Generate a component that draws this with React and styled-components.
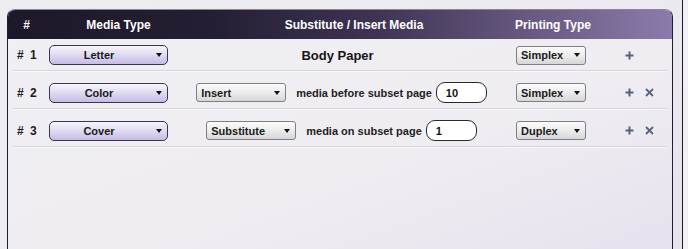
import styled, { createGlobalStyle } from "styled-components";

const GlobalStyle = createGlobalStyle`
  html, body {
    margin: 0;
    padding: 0;
    background: #f1f0f4;
    overflow: hidden;
  }
  body {
    font-family: "Liberation Sans", Arial, sans-serif;
  }
`;

const Window = styled.div`
  box-sizing: border-box;
  display: flex;
  width: 683px;
  height: 249px;
  padding: 9px 0 0 7px;
  background: linear-gradient(135deg, #eeedf1 0%, #eceaf0 70%, #e7e3ee 100%);
  border-right: 1px solid #1c1826;
`;

const Panel = styled.div`
  box-sizing: border-box;
  width: 666px;
  border: 1px solid #221d2e;
  border-top-color: #8a8790;
  border-bottom: none;
  border-radius: 8px 8px 0 0;
  background: linear-gradient(160deg, #f0eff3 0%, #efedf2 60%, #e6e2ee 100%);
`;

const Header = styled.div`
  display: grid;
  grid-template-columns: 27px 157px 314px 84px 1fr;
  align-items: center;
  height: 29px;
  padding-left: 5px;
  border-radius: 7px 7px 0 0;
  background: linear-gradient(
    to right,
    #1d1929 0%,
    #241e32 30%,
    #3e3353 55%,
    #66587f 78%,
    #8b7bab 100%
  );
`;

const HeaderCell = styled.div`
  color: #ffffff;
  font-weight: 700;
  font-size: 12px;
  text-align: center;
`;

const Body = styled.div`
  padding: 0 5px;
`;

const Row = styled.div`
  display: grid;
  grid-template-columns: 36px 118px 1fr 85px 66px;
  align-items: center;
  padding: 10px 0 5px;
  border-bottom: 1px solid #d7d4db;
  box-shadow: 0 1px 0 #f8f7f9;
  margin-bottom: 1px;

  &:first-child {
    padding-top: 6px;
  }
`;

const Num = styled.div`
  padding-left: 4px;
  font-size: 12px;
  font-weight: 700;
  word-spacing: 3px;
  color: #1c1c1c;
`;

const Middle = styled.div`
  display: flex;
  align-items: center;
  justify-content: center;
`;

const Title = styled.div`
  font-size: 13px;
  font-weight: 700;
  color: #161616;
  margin-right: 8px;
`;

const Label = styled.span`
  font-size: 11px;
  font-weight: 700;
  color: #1e1e1e;
  margin: 0 4px 0 10px;
`;

const Caret = styled.span`
  width: 0;
  height: 0;
  border-left: 3.5px solid transparent;
  border-right: 3.5px solid transparent;
  border-top: 4px solid #111;
  flex: 0 0 auto;
`;

const Select = styled.div`
  box-sizing: border-box;
  display: flex;
  align-items: center;
  width: ${(p) => p.$width}px;
  height: ${(p) => (p.$media ? 20 : 19)}px;
  padding: 0 5px 0 4px;
  font-size: 11px;
  font-weight: 700;
  color: #1a1a1a;
  border: 1px solid ${(p) => (p.$media ? "#3a344c" : "#7e7e84")};
  border-radius: ${(p) => (p.$media ? 5 : 3)}px;
  background: ${(p) =>
    p.$media
      ? "linear-gradient(to bottom, #f7f6fb 0%, #e2dcf2 45%, #c6bce3 100%)"
      : "linear-gradient(to bottom, #fbfbfb 0%, #ececec 50%, #d6d6d8 100%)"};

  span:first-child {
    flex: 1;
    text-align: ${(p) => (p.$media ? "center" : "left")};
    padding-right: ${(p) => (p.$media ? 12 : 0)}px;
  }
`;

const Field = styled.div`
  box-sizing: border-box;
  display: flex;
  align-items: center;
  width: ${(p) => p.$width}px;
  height: 21px;
  padding-left: 9px;
  font-size: 11px;
  font-weight: 700;
  color: #111;
  background: #ffffff;
  border: 1px solid #2a2a2e;
  border-radius: 9px;
`;

const Actions = styled.div`
  display: flex;
  align-items: center;
  gap: 11px;
  padding-left: 24px;
  color: #56637c;
`;

function Dropdown({ value, width, media }) {
  return (
    <Select $width={width} $media={media}>
      <span>{value}</span>
      <Caret />
    </Select>
  );
}

function Plus() {
  return (
    <svg width="9" height="9" viewBox="0 0 9 9">
      <path d="M4.5 0.5v8M0.5 4.5h8" stroke="currentColor" strokeWidth="2" />
    </svg>
  );
}

function Cross() {
  return (
    <svg width="9" height="9" viewBox="0 0 9 9">
      <path d="M1 1l7 7M8 1l-7 7" stroke="currentColor" strokeWidth="1.8" />
    </svg>
  );
}

const rows = [
  { n: 1, media: "Letter", print: "Simplex" },
  { n: 2, media: "Color", mode: "Insert", text: "media before subset page", page: "10", print: "Simplex" },
  { n: 3, media: "Cover", mode: "Substitute", text: "media on subset page", page: "1", print: "Duplex" },
];

export default function App() {
  return (
    <>
      <GlobalStyle />
      <Window>
        <Panel>
          <Header>
            <HeaderCell>#</HeaderCell>
            <HeaderCell>Media Type</HeaderCell>
            <HeaderCell>Substitute / Insert Media</HeaderCell>
            <HeaderCell>Printing Type</HeaderCell>
          </Header>
          <Body>
            {rows.map((r) => (
              <Row key={r.n}>
                <Num># {r.n}</Num>
                <Dropdown value={r.media} width={119} media />
                <Middle>
                  {r.mode ? (
                    <>
                      <Dropdown value={r.mode} width={90} />
                      <Label>{r.text}</Label>
                      <Field $width={51}>{r.page}</Field>
                    </>
                  ) : (
                    <Title>Body Paper</Title>
                  )}
                </Middle>
                <Dropdown value={r.print} width={70} />
                <Actions>
                  <Plus />
                  {r.n > 1 && <Cross />}
                </Actions>
              </Row>
            ))}
          </Body>
        </Panel>
      </Window>
    </>
  );
}
